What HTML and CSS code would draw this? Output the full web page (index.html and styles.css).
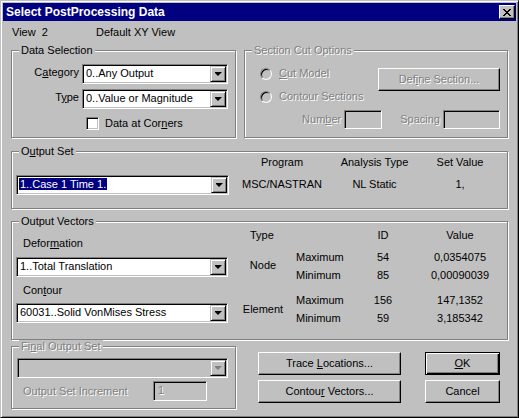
FILE: index.html
```html
<!DOCTYPE html>
<html lang="en">
<head>
  <meta charset="UTF-8">
  <title>Select PostProcessing Data</title>
  <link rel="stylesheet" href="styles.css">
</head>
<body>
  <div class="dialog">
    <div class="titlebar">
      <span>Select PostProcessing Data</span>
      <span class="close-btn">
        <svg width="8" height="7" viewBox="0 0 8 7" shape-rendering="crispEdges"><path d="M0 0h2v1h-2zM6 0h2v1h-2zM1 1h2v1h-2zM5 1h2v1h-2zM2 2h4v1h-4zM3 3h2v1h-2zM2 4h4v1h-4zM1 5h2v1h-2zM5 5h2v1h-2zM0 6h2v1h-2zM6 6h2v1h-2z" fill="#000"/></svg>
      </span>
    </div>

    <div class="content">
      <div class="view-row">
        <span class="view-no">View&nbsp;&nbsp;2</span>
        <span>Default XY View</span>
      </div>

      <!-- Data selection / section cut -->
      <div class="top-row">
        <div class="group data-sel">
          <span class="group-title">Data Selection</span>
          <div class="field-grid">
            <label>C<u>a</u>tegory</label>
            <div class="combo"><span class="combo-text">0..Any Output</span><span class="drop"></span></div>
            <label>T<u>y</u>pe</label>
            <div class="combo"><span class="combo-text">0..Value or Magnitude</span><span class="drop"></span></div>
            <div class="check-row"><span class="checkbox"></span><span>Data at Cor<u>n</u>ers</span></div>
          </div>
        </div>

        <div class="group section-cut off">
          <span class="group-title">Section Cut Options</span>
          <div class="cut-top">
            <div class="radios">
              <div class="radio-row"><span class="radio"></span><span><u>C</u>ut Model</span></div>
              <div class="radio-row"><span class="radio"></span><span>Contour Sections</span></div>
            </div>
            <div class="btn define-btn">Def<u>i</u>ne Section...</div>
          </div>
          <div class="cut-fields">
            <span>Num<u>b</u>er</span>
            <span class="edit num-box"></span>
            <span class="spacing-label">Spacing</span>
            <span class="edit spacing-box"></span>
          </div>
        </div>
      </div>

      <!-- Output set -->
      <div class="group output-set">
        <span class="group-title">O<u>u</u>tput Set</span>
        <div class="combo set-combo"><span class="combo-text"><span class="sel">1..Case 1 Time 1.</span></span><span class="drop"></span></div>
        <div class="set-info">
          <span>Program</span>
          <span>Analysis Type</span>
          <span>Set Value</span>
          <span>MSC/NASTRAN</span>
          <span>NL Static</span>
          <span>1,</span>
        </div>
      </div>

      <!-- Output vectors -->
      <div class="group output-vectors">
        <span class="group-title">Output Vectors</span>
        <div class="vec-left">
          <div class="vec-label">Defor<u>m</u>ation</div>
          <div class="combo wide-combo"><span class="combo-text">1..Total Translation</span><span class="drop"></span></div>
          <div class="vec-label contour-label">Con<u>t</u>our</div>
          <div class="combo wide-combo"><span class="combo-text">60031..Solid VonMises Stress</span><span class="drop"></span></div>
        </div>
        <div class="vec-table">
          <div class="vec-head">
            <span>Type</span>
            <span></span>
            <span>ID</span>
            <span>Value</span>
          </div>
          <div class="vec-block">
            <span class="vec-type">Node</span>
            <div class="vec-rows">
              <span class="rl">Maximum</span><span>54</span><span>0,0354075</span>
              <span class="rl">Minimum</span><span>85</span><span>0,00090039</span>
            </div>
          </div>
          <div class="vec-block elem-block">
            <span class="vec-type">Element</span>
            <div class="vec-rows">
              <span class="rl">Maximum</span><span>156</span><span>147,1352</span>
              <span class="rl">Minimum</span><span>59</span><span>3,185342</span>
            </div>
          </div>
        </div>
      </div>

      <!-- Final output set + buttons -->
      <div class="bottom-row">
        <div class="group final-set off">
          <span class="group-title">Fi<u>n</u>al Output Set</span>
          <div class="combo final-combo"><span class="combo-text"></span><span class="drop"></span></div>
          <div class="inc-row">
            <span class="inc-label">Output Set Increment</span>
            <span class="edit inc-box">1</span>
          </div>
        </div>
        <div class="btn-col wide-btns">
          <div class="btn">Trace <u>L</u>ocations...</div>
          <div class="btn">Contou<u>r</u> Vectors...</div>
        </div>
        <div class="btn-col">
          <div class="btn default-btn"><u>O</u>K</div>
          <div class="btn">Cancel</div>
        </div>
      </div>
    </div>
  </div>
</body>
</html>
```

FILE: styles.css
```css
body {
  margin: 0;
  background: #c0c0c0;
  font-family: "Liberation Sans", Arial, sans-serif;
  font-size: 11px;
  line-height: 13px;
  color: #000;
}

.dialog {
  width: 519px;
  height: 418px;
  box-sizing: border-box;
  border: 1px solid;
  border-color: #c0c0c0 #000 #000 #c0c0c0;
  box-shadow: inset 1px 1px #fff, inset -1px -1px #808080;
  padding: 2px;
  background: #c0c0c0;
}

/* title bar */
.titlebar {
  height: 18px;
  background: #000080;
  color: #fff;
  font-weight: bold;
  font-size: 12px;
  line-height: 18px;
  padding-left: 3px;
  display: flex;
  align-items: center;
  justify-content: space-between;
}

.close-btn {
  width: 16px;
  height: 14px;
  box-sizing: border-box;
  margin-right: 1px;
  background: #c0c0c0;
  border: 1px solid;
  border-color: #fff #000 #000 #fff;
  box-shadow: inset -1px -1px #808080;
  display: flex;
  align-items: center;
  justify-content: center;
  padding: 1px 1px 0 0;
}

.close-btn svg {
  display: block;
}

.content {
  padding: 5px 8px 0 8px;
}

.view-row {
  display: flex;
  padding-left: 1px;
  margin-bottom: 11px;
}

.view-no {
  width: 84px;
}

/* group boxes */
.group {
  position: relative;
  box-sizing: border-box;
  border: 1px solid #808080;
  box-shadow: inset 1px 1px #fff, 1px 1px #fff;
}

.group-title {
  position: absolute;
  top: -7px;
  left: 7px;
  padding: 0 2px;
  background: #c0c0c0;
}

.off,
.off .group-title {
  color: #808080;
  text-shadow: 1px 1px #fff;
}

.top-row {
  display: flex;
  gap: 8px;
}

.data-sel {
  width: 225px;
  height: 88px;
  padding-top: 13px;
}

.field-grid {
  display: grid;
  grid-template-columns: 67px 146px;
  column-gap: 3px;
  row-gap: 5px;
}

.field-grid label {
  text-align: right;
  padding-top: 2px;
}

.check-row {
  grid-column: 2;
  display: flex;
  align-items: center;
  gap: 6px;
  padding-left: 4px;
  margin-top: 3px;
}

.checkbox {
  width: 13px;
  height: 13px;
  box-sizing: border-box;
  background: #fff;
  border: 1px solid;
  border-color: #808080 #fff #fff #808080;
  box-shadow: inset 1px 1px #000, inset -1px -1px #c0c0c0;
}

/* combo boxes and edits */
.combo {
  height: 20px;
  box-sizing: border-box;
  display: flex;
  background: #fff;
  border: 1px solid;
  border-color: #808080 #fff #fff #808080;
  box-shadow: inset 1px 1px #000, inset -1px -1px #c0c0c0;
  padding: 1px;
}

.combo-text {
  flex: 1;
  padding-left: 2px;
  padding-top: 1px;
  white-space: nowrap;
  overflow: hidden;
}

.drop {
  width: 16px;
  height: 16px;
  box-sizing: border-box;
  flex: none;
  background: #c0c0c0;
  border: 1px solid;
  border-color: #c0c0c0 #000 #000 #c0c0c0;
  box-shadow: inset 1px 1px #fff, inset -1px -1px #808080;
  display: flex;
  align-items: center;
  justify-content: center;
}

.drop::after {
  content: "";
  width: 7px;
  height: 4px;
  background: #000;
  clip-path: polygon(0 0, 7px 0, 7px 1px, 6px 1px, 6px 2px, 5px 2px, 5px 3px, 4px 3px, 4px 4px, 3px 4px, 3px 3px, 2px 3px, 2px 2px, 1px 2px, 1px 1px, 0 1px);
}

.edit {
  height: 19px;
  box-sizing: border-box;
  background: #c0c0c0;
  border: 1px solid;
  border-color: #808080 #fff #fff #808080;
  box-shadow: inset 1px 1px #000, inset -1px -1px #c0c0c0;
  padding: 2px 0 0 4px;
}

/* section cut */
.section-cut {
  flex: 1;
  height: 88px;
  padding: 16px 7px 0 15px;
}

.cut-top {
  display: flex;
  justify-content: space-between;
  align-items: flex-start;
}

.radios {
  display: flex;
  flex-direction: column;
  gap: 10px;
}

.radio-row {
  display: flex;
  align-items: center;
  gap: 7px;
}

.radio {
  width: 12px;
  height: 12px;
  box-sizing: border-box;
  border-radius: 50%;
  background: #c0c0c0;
  border: 1px solid;
  border-color: #808080 #fff #fff #808080;
  box-shadow: inset 1px 1px #000;
}

.btn {
  height: 23px;
  box-sizing: border-box;
  border: 1px solid;
  border-color: #fff #000 #000 #fff;
  box-shadow: inset -1px -1px #808080;
  background: #c0c0c0;
  text-align: center;
  line-height: 20px;
}

.define-btn {
  width: 122px;
  margin-top: 1px;
}

.cut-fields {
  display: flex;
  justify-content: flex-end;
  align-items: center;
  margin-top: 7px;
}

.num-box {
  width: 38px;
  margin-left: 3px;
}

.spacing-label {
  margin-left: 18px;
}

.spacing-box {
  width: 57px;
  margin-left: 3px;
}

/* output set */
.output-set {
  margin-top: 13px;
  height: 58px;
  display: flex;
}

.set-combo {
  width: 213px;
  margin: 23px 0 0 4px;
}

.sel {
  background: #000080;
  color: #fff;
  padding: 0 1px;
  margin-left: -1px;
}

.set-info {
  margin-left: 7px;
  padding-top: 4px;
  display: grid;
  grid-template-columns: 92px 93px 78px;
  grid-auto-rows: 13px;
  row-gap: 9px;
  text-align: center;
}

/* output vectors */
.output-vectors {
  margin-top: 12px;
  height: 119px;
  display: flex;
}

.vec-left {
  width: 212px;
  padding: 15px 0 0 4px;
}

.vec-label {
  padding-left: 7px;
  margin-bottom: 7px;
}

.contour-label {
  margin-top: 7px;
  margin-bottom: 6px;
}

.vec-table {
  margin-left: 8px;
  padding-top: 7px;
}

.vec-head {
  display: grid;
  grid-template-columns: 54px 62px 62px 92px;
  text-align: center;
  margin-bottom: 9px;
}

.vec-head span:first-child {
  text-align: left;
  padding-left: 14px;
}

.vec-block {
  display: flex;
  align-items: center;
}

.elem-block {
  margin-top: 12px;
}

.vec-type {
  width: 54px;
  text-align: center;
  margin-bottom: 3px;
}

.elem-block .vec-type {
  margin-bottom: 0;
}

.vec-rows {
  display: grid;
  grid-template-columns: 62px 62px 92px;
  row-gap: 5px;
  text-align: center;
}

.vec-rows .rl {
  text-align: left;
  padding-left: 6px;
}

/* final output set + buttons */
.bottom-row {
  margin-top: 6px;
  display: flex;
  align-items: flex-start;
}

.final-set {
  width: 225px;
  height: 63px;
  padding-top: 11px;
}

.final-combo {
  width: 211px;
  margin-left: 5px;
  background: #c0c0c0;
}

.final-combo .drop::after {
  background: #808080;
}

.inc-row {
  display: flex;
  align-items: center;
  margin-top: 3px;
}

.inc-label {
  width: 130px;
  padding-left: 11px;
}

.inc-box {
  width: 54px;
  height: 20px;
}

.btn-col {
  display: flex;
  flex-direction: column;
  gap: 5px;
  margin: 6px 0 0 24px;
  width: 75px;
}

.wide-btns {
  width: 143px;
  margin-left: 22px;
}

.default-btn {
  border: 1px solid #000;
  box-shadow: inset 1px 1px #fff, inset -1px -1px #000, inset -2px -2px #808080;
}
```
